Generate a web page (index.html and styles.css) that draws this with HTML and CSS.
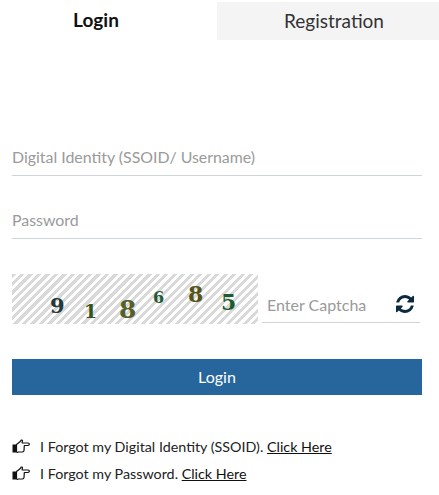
FILE: index.html
```html
<!DOCTYPE html>
<html lang="en">

<head>
    <meta charset="UTF-8">
    <meta name="viewport" content="width=device-width, initial-scale=1.0">
    <title>Login</title>
    <link rel="stylesheet" href="styles.css">
</head>

<body>
    <div class="tabs">
        <div class="tab tab-login">Login</div>
        <div class="tab tab-reg">Registration</div>
    </div>
    <form class="form">
        <div class="field">Digital Identity (SSOID/ Username)</div>
        <div class="field field-pass">Password</div>
        <div class="captcha-row">
            <div class="captcha">
                <span class="d d1">9</span>
                <span class="d d2">1</span>
                <span class="d d3">8</span>
                <span class="d d4">6</span>
                <span class="d d5">8</span>
                <span class="d d6">5</span>
            </div>
            <div class="captcha-input">
                <span>Enter Captcha</span>
                <svg class="refresh" viewBox="0 0 1536 1536" width="18" height="18">
                    <path fill="#0b2a3f" d="M1511 928q0 5-1 7-64 268-268 434.500t-478 166.500q-146 0-282.500-55t-243.500-157l-129 129q-19 19-45 19t-45-19-19-45v-448q0-26 19-45t45-19h448q26 0 45 19t19 45-19 45l-137 137q71 66 161 102t187 36q134 0 250-65t186-179q11-17 53-117 8-23 30-23h192q13 0 22.500 9.500t9.500 22.500zm25-800v448q0 26-19 45t-45 19h-448q-26 0-45-19t-19-45 19-45l138-138q-148-137-349-137-134 0-250 65t-186 179q-11 17-53 117-8 23-30 23h-199q-13 0-22.500-9.500t-9.500-22.500v-7q65-268 270-434.500t480-166.500q146 0 284 55.500t245 156.500l130-129q19-19 45-19t45 19 19 45z"/>
                </svg>
            </div>
        </div>
        <button class="btn" type="button">Login</button>
    </form>
    <div class="links">
        <div class="link-row">
            <svg class="hand" viewBox="0 0 18 15" width="18" height="15">
                <path fill="#fff" stroke="#111" stroke-width="1.200" stroke-linejoin="round" d="M4.500 5.500 8 2.800 9.200 1l1.300.4-.4 2.600h6q1.300.2 1.200 1.300-.2 1-1.400 1.200h-3.600l-.3 5.200q-.3 1.200-1.500 1.300H6.500Q5 13.800 4.500 12.800z"/>
                <rect x="0.500" y="5.500" width="4" height="8" fill="#111"/>
            </svg>
            <span>I Forgot my Digital Identity (SSOID). <a href="#">Click Here</a></span>
        </div>
        <div class="link-row">
            <svg class="hand" viewBox="0 0 18 15" width="18" height="15">
                <path fill="#fff" stroke="#111" stroke-width="1.200" stroke-linejoin="round" d="M4.500 5.500 8 2.800 9.200 1l1.300.4-.4 2.600h6q1.300.2 1.200 1.300-.2 1-1.400 1.200h-3.600l-.3 5.200q-.3 1.200-1.500 1.300H6.500Q5 13.800 4.500 12.800z"/>
                <rect x="0.500" y="5.500" width="4" height="8" fill="#111"/>
            </svg>
            <span>I Forgot my Password. <a href="#">Click Here</a></span>
        </div>
    </div>
</body>
</html>
```

FILE: styles.css
```css
* {
    margin: 0;
    padding: 0;
    box-sizing: border-box;
}
body {
    font-family: Lato, "Noto Sans", sans-serif;
    background-color: white;
    color: #212529;
    overflow: hidden;
}
.tabs {
    display: flex;
    height: 40px;
}
.tab {
    font-size: 19px;
    display: flex;
    align-items: center;
    justify-content: center;
}
.tab-login {
    width: 217px;
    padding-right: 25px;
    padding-bottom: 2px;
    font-weight: 700;
    color: #111;
}
.tab-reg {
    flex: 1;
    margin-top: 2px;
    padding-left: 12px;
    padding-bottom: 2px;
    background-color: #f4f4f4;
    color: #333;
}
.form {
    padding: 0 17px 0 12px;
}
.field {
    height: 38px;
    margin-top: 25px;
    border-bottom: 1px solid #ced4da;
    color: #9a9a9a;
    font-size: 15.900px;
    display: flex;
    align-items: center;
}
.form .field:first-child {
    margin-top: 98px;
}
.captcha-row {
    display: flex;
    margin-top: 35px;
    margin-right: 2px;
}
.captcha {
    position: relative;
    width: 246px;
    height: 50px;
    background: repeating-linear-gradient(135deg, #d9d9d9 0, #d9d9d9 3px, #fff 3px, #fff 6px);
}
.d {
    position: absolute;
    font-family: "DejaVu Serif", serif;
    font-weight: bold;
    line-height: 1;
}
.d1 { left: 38px; top: 21px; font-size: 21px; color: #23393a; }
.d2 { left: 72px; top: 28px; font-size: 19px; color: #35521f; }
.d3 { left: 107px; top: 23px; font-size: 25px; color: #55602a; }
.d4 { left: 141px; top: 16px; font-size: 16px; color: #1f5a37; }
.d5 { left: 176px; top: 9px; font-size: 22px; color: #55551a; }
.d6 { left: 209px; top: 17px; font-size: 22px; color: #1d5a2c; }
.captcha-input {
    flex: 1;
    margin-left: 4px;
    height: 49px;
    padding: 12px 6px 0 5px;
    border-bottom: 1px solid #ced4da;
    color: #9a9a9a;
    font-size: 16px;
    display: flex;
    align-items: center;
    justify-content: space-between;
}
.refresh {
    flex-shrink: 0;
}
.btn {
    display: block;
    width: 100%;
    height: 36px;
    margin-top: 35px;
    padding-bottom: 1px;
    border: none;
    background-color: #27669c;
    color: white;
    font-family: inherit;
    font-size: 16px;
}
.links {
    padding: 38px 0 0 12px;
}
.link-row {
    font-size: 14.300px;
    height: 27px;
    color: #222;
    display: flex;
    align-items: center;
}
.hand {
    margin-right: 10px;
    flex-shrink: 0;
}
.link-row a {
    color: #111;
}
```
